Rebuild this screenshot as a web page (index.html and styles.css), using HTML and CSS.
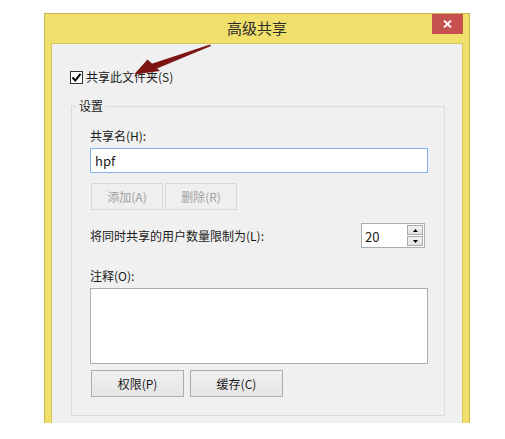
FILE: index.html
```html
<!DOCTYPE html>
<html lang="zh-CN">
<head>
<meta charset="utf-8">
<title>高级共享</title>
<link rel="stylesheet" href="styles.css">
</head>
<body>
<div class="window">
  <div class="titlebar">
    <span class="title">高级共享</span>
    <div class="close">
      <svg width="9" height="8" viewBox="0 0 9 8"><path d="M1 0.5 L8 7.5 M8 0.5 L1 7.5" stroke="#fff" stroke-width="1.8"/></svg>
    </div>
  </div>
  <div class="client">
    <div class="check-row">
      <span class="checkbox"><svg width="11" height="11" viewBox="0 0 11 11"><path d="M1.5 5.5 L4.3 8.5 L9.5 1.8" fill="none" stroke="#000" stroke-width="2"/></svg></span>
      <span>共享此文件夹(S)</span>
    </div>
    <div class="group">
      <div class="group-title">设置</div>
      <div class="label first">共享名(H):</div>
      <div class="textbox focused">hpf</div>
      <div class="btn-row small">
        <div class="btn disabled">添加(A)</div>
        <div class="btn disabled">删除(R)</div>
      </div>
      <div class="limit-row">
        <span class="label">将同时共享的用户数量限制为(L):</span>
        <div class="spin">
          <span class="spin-value">20</span>
          <div class="spin-btns">
            <div class="spin-btn"><svg width="5" height="3" viewBox="0 0 5 3"><path d="M2.5 0 L5 3 L0 3 Z" fill="#000"/></svg></div>
            <div class="spin-btn"><svg width="5" height="3" viewBox="0 0 5 3"><path d="M0 0 L5 0 L2.5 3 Z" fill="#000"/></svg></div>
          </div>
        </div>
      </div>
      <div class="label note">注释(O):</div>
      <div class="textarea"></div>
      <div class="btn-row big">
        <div class="btn">权限(P)</div>
        <div class="btn">缓存(C)</div>
      </div>
    </div>
  </div>
  <svg class="arrow" width="90" height="40" viewBox="125 40 90 40">
    <path d="M210 44.5 L211 46 L157 68.5 L151 64 Z" fill="#7d1414"/>
    <path d="M134 74.5 L147.5 59.5 L160 71 Z" fill="#7d1414"/>
  </svg>
</div>
</body>
</html>
```

FILE: styles.css
```css
html, body {
  margin: 0;
  padding: 0;
  background: #ffffff;
}

body {
  font-family: "Noto Sans CJK SC", "Noto Sans", sans-serif;
  font-size: 12px;
  line-height: 16px;
  color: #1a1a1a;
}

.window {
  position: relative;
  margin: 13px 0 0 44px;
  width: 426px;
  height: 410px;
  box-sizing: border-box;
  background: #f1df6c;
  border: 1px solid #c9b74e;
  border-bottom: none;
  padding: 0 6px;
}

.titlebar {
  height: 29px;
  display: grid;
  grid-template-columns: 1fr auto 1fr;
}

.title {
  grid-column: 2;
  align-self: center;
  font-size: 15px;
  line-height: 20px;
  color: #2b2b2b;
  margin-top: -1px;
}

.close {
  grid-column: 3;
  justify-self: end;
  align-self: start;
  width: 31px;
  height: 20px;
  background: #c75050;
  display: flex;
  align-items: center;
  justify-content: center;
}

.client {
  height: 380px;
  box-sizing: border-box;
  background: #f0f0f0;
  border: 1px solid #d8c65e;
  border-bottom: none;
  padding: 25px 17px 0 19px;
}

.check-row {
  display: flex;
  align-items: center;
  gap: 3px;
  margin-left: -1px;
  height: 16px;
}

.checkbox {
  width: 11px;
  height: 11px;
  border: 1px solid #333;
  background: #fff;
  display: flex;
  align-items: center;
  justify-content: center;
}

.group {
  margin-top: 21px;
  border: 1px solid #dcdcdc;
  padding: 0 16px 19px 18px;
  height: 310px;
  box-sizing: border-box;
}

.group-title {
  margin: -9px 0 0 -13px;
  padding: 0 2px;
  width: fit-content;
  background: #f0f0f0;
}

.label.first {
  margin-top: 14px;
}

.textbox {
  margin-top: 4px;
  height: 25px;
  box-sizing: border-box;
  background: #fff;
  border: 1px solid #abadb3;
  padding: 3px 4px;
  font-size: 13px;
  line-height: 17px;
}

.textbox.focused {
  border-color: #7eb4ea;
}

.btn-row {
  display: flex;
  margin-left: 1px;
}

.btn-row.small {
  margin-top: 10px;
  gap: 2px;
}

.btn-row.big {
  margin-top: 6px;
  gap: 6px;
}

.btn {
  height: 27px;
  box-sizing: border-box;
  border: 1px solid #acacac;
  background: linear-gradient(#f0f0f0, #e5e5e5);
  display: flex;
  align-items: center;
  justify-content: center;
  color: #1a1a1a;
}

.btn-row.small .btn {
  width: 72px;
}

.btn-row.big .btn {
  width: 93px;
}

.btn.disabled {
  border-color: #d9d9d9;
  background: #efefef;
  color: #a0a0a0;
}

.limit-row {
  margin-top: 13px;
  display: flex;
  align-items: center;
  justify-content: space-between;
}

.spin {
  width: 64px;
  height: 25px;
  box-sizing: border-box;
  margin-right: 3px;
  background: #fff;
  border: 1px solid #abadb3;
  display: flex;
  justify-content: space-between;
}

.spin-value {
  padding: 4px 0 0 3px;
  font-size: 13px;
  line-height: 17px;
}

.spin-btns {
  width: 16px;
  display: flex;
  flex-direction: column;
  gap: 1px;
  padding: 1px 1px 1px 0;
}

.spin-btn {
  flex: 1;
  border: 1px solid #acacac;
  background: linear-gradient(#f2f2f2, #e2e2e2);
  display: flex;
  align-items: center;
  justify-content: center;
}

.label.note {
  margin-top: 20px;
}

.textarea {
  margin-top: 4px;
  height: 76px;
  box-sizing: border-box;
  background: #fff;
  border: 1px solid #abadb3;
}

.arrow {
  position: absolute;
  left: 80px;
  top: 26px;
}
```
